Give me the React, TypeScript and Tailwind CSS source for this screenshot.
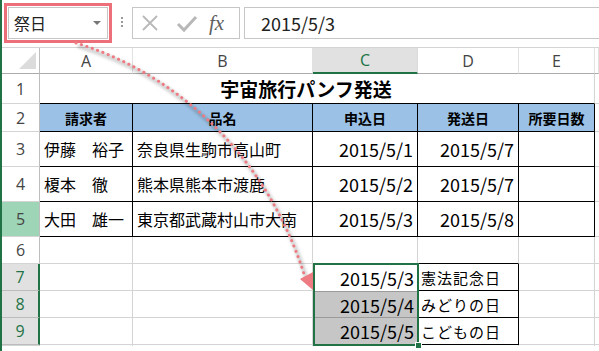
import React from 'react';

const jp = "font-['Noto_Sans_CJK_JP','Noto_Sans_CJK_SC',sans-serif]";

const RowHead: React.FC<{ n?: number; variant?: 'plain' | 'hot' | 'sel' }> = ({ n, variant = 'plain' }) => {
  if (variant === 'sel') {
    return (
      <div className="flex items-center justify-center bg-[#e1e1e1] border-b border-[#bcbcbc] border-r-2 border-r-[#217346] text-[#217346] text-[16px] font-['Open_Sans',sans-serif]">
        {n}
      </div>
    );
  }
  return (
    <div
      className={`flex items-center justify-center border-b border-[#d4d4d4] border-r border-r-[#bdbdbd] text-[#444] text-[16px] font-['Open_Sans',sans-serif] ${
        variant === 'hot' ? 'bg-[#9fd5b7]' : 'bg-white'
      }`}
    >
      {n}
    </div>
  );
};

const ColHead: React.FC<{ label: string; active?: boolean }> = ({ label, active }) => (
  <div
    className={`flex items-center justify-center text-[16px] font-['Open_Sans',sans-serif] ${
      active
        ? 'bg-[#e1e1e1] text-[#217346] border-b-2 border-[#217346] border-r border-r-[#dadada]'
        : 'bg-white text-[#444] border-b border-[#ababab] border-r border-r-[#e1e1e1]'
    }`}
  >
    {label}
  </div>
);

const App: React.FC = () => {
  const names = [
    ['伊藤　裕子', '奈良県生駒市高山町', '2015/5/1', '2015/5/7'],
    ['榎本　徹', '熊本県熊本市渡鹿', '2015/5/2', '2015/5/7'],
    ['大田　雄一', '東京都武蔵村山市大南', '2015/5/3', '2015/5/8'],
  ];

  return (
    <div className={`relative w-[599px] h-[351px] overflow-hidden bg-white border-l-2 border-[#217346] ${jp}`}>
      {/* name box + formula bar */}
      <div className="flex h-[48px] items-start border-b border-[#d4d4d4]">
        <div className="ml-[2px] mt-[3px] w-[108px] h-[40px] border-[3px] border-[#ec6f79] p-px">
          <div className="flex h-full items-center justify-between border border-[#c6c6c6] pl-[5px] pr-[6px]">
            <span className="text-[16px] text-[#222] leading-none">祭日</span>
            <span className="w-0 h-0 border-l-[4px] border-r-[4px] border-t-[4px] border-l-transparent border-r-transparent border-t-[#777]" />
          </div>
        </div>
        <div className="ml-[9px] mt-[17px] flex flex-col gap-[2px]">
          <span className="w-[2px] h-[2px] bg-[#999]" />
          <span className="w-[2px] h-[2px] bg-[#999]" />
          <span className="w-[2px] h-[2px] bg-[#999]" />
        </div>
        <div className="ml-[9px] mt-[7px] flex h-[32px] w-[108px] items-center border border-[#c6c6c6] bg-white">
          <svg width="22" height="22" viewBox="0 0 22 22" className="ml-[6px]">
            <path d="M4 4 L18 18 M18 4 L4 18" stroke="#b8b8b8" strokeWidth="1.8" fill="none" />
          </svg>
          <svg width="24" height="22" viewBox="0 0 24 22" className="ml-[14px]">
            <path d="M3 12 L9 18 L21 5" stroke="#b8b8b8" strokeWidth="3" fill="none" />
          </svg>
          <span className="ml-[10px] text-[21px] italic text-[#5f5f5f] leading-none font-['Liberation_Serif',serif]">fx</span>
        </div>
        <div className="ml-[4px] mt-[7px] flex h-[32px] flex-1 items-center border border-r-0 border-[#c6c6c6] pl-[16px]">
          <span className="text-[18px] text-[#222] leading-none">2015/5/3</span>
        </div>
      </div>

      {/* sheet */}
      <div className="grid grid-cols-[38px_93px_180px_105px_101px_76px_1fr] grid-rows-[26px_30px_28px_35px_35px_35px_27px_27px_27px_27px]">
        {/* column headers */}
        <div className="flex items-end justify-end pr-[3px] pb-[4px] bg-white border-b border-[#ababab] border-r border-r-[#bdbdbd]">
          <svg width="17" height="17" viewBox="0 0 17 17">
            <polygon points="17,0 17,17 0,17" fill="#dcdcdc" />
          </svg>
        </div>
        <ColHead label="A" />
        <ColHead label="B" />
        <ColHead label="C" active />
        <ColHead label="D" />
        <ColHead label="E" />
        <ColHead label="" />

        {/* row 1 */}
        <RowHead n={1} />
        <div className="col-span-5 flex items-center justify-center pr-[22px] border-b border-black border-r border-r-[#d4d4d4]">
          <span className="text-[19px] font-bold text-black leading-none">宇宙旅行パンフ発送</span>
        </div>
        <div className="border-b border-[#d4d4d4]" />

        {/* row 2 */}
        <RowHead n={2} />
        {['請求者', '品名', '申込日', '発送日', '所要日数'].map((h) => (
          <div
            key={h}
            className="flex items-center justify-center bg-[#9bc2e6] border-r border-b border-black text-[14px] font-bold text-black leading-none"
          >
            {h}
          </div>
        ))}
        <div className="border-b border-[#d4d4d4]" />

        {/* rows 3-5 */}
        {names.map((r, i) => (
          <React.Fragment key={r[0]}>
            <RowHead n={i + 3} variant={i === 2 ? 'hot' : 'plain'} />
            <div className="flex items-center pl-[4px] border-r border-b border-black text-[16px] text-black leading-none whitespace-pre">
              {r[0]}
            </div>
            <div className="flex items-center pl-[4px] border-r border-b border-black text-[16px] text-black leading-none">
              {r[1]}
            </div>
            <div className="flex items-center justify-end pr-[4px] border-r border-b border-black text-[18px] text-black leading-none">
              {r[2]}
            </div>
            <div className="flex items-center justify-end pr-[4px] border-r border-b border-black text-[18px] text-black leading-none">
              {r[3]}
            </div>
            <div className="border-r border-b border-black" />
            <div className="border-b border-[#d4d4d4]" />
          </React.Fragment>
        ))}

        {/* row 6 */}
        <RowHead n={6} />
        <div className="border-r border-b border-[#d4d4d4]" />
        <div className="border-r border-b border-[#d4d4d4]" />
        <div className="border-r border-[#d4d4d4]" />
        <div className="border-r border-b border-r-[#d4d4d4] border-b-black" />
        <div className="border-r border-b border-[#d4d4d4]" />
        <div className="border-b border-[#d4d4d4]" />

        {/* rows 7-9 */}
        <RowHead n={7} variant="sel" />
        <div className="border-r border-b border-[#d4d4d4]" />
        <div className="border-r border-b border-[#d4d4d4]" />
        <div className="relative row-span-3 -mt-px -mr-px -mb-px flex flex-col border-2 border-[#217346]">
          <div className="flex flex-1 items-center justify-end pr-[3px] bg-white border-b border-[#9a9a9a] text-[18px] text-black leading-none">
            2015/5/3
          </div>
          <div className="flex flex-1 items-center justify-end pr-[3px] bg-[#c6c6c6] border-b border-[#9a9a9a] text-[18px] text-black leading-none">
            2015/5/4
          </div>
          <div className="flex flex-1 items-center justify-end pr-[3px] bg-[#c6c6c6] text-[18px] text-black leading-none">
            2015/5/5
          </div>
          <span className="absolute -right-[5px] -bottom-[5px] w-[7px] h-[7px] bg-[#217346] border border-white" />
        </div>
        <div className="flex items-center pl-[3px] border-r border-b border-black text-[15px] tracking-[1px] text-black leading-none">
          憲法記念日
        </div>
        <div className="border-r border-b border-[#d4d4d4]" />
        <div className="border-b border-[#d4d4d4]" />

        <RowHead n={8} variant="sel" />
        <div className="border-r border-b border-[#d4d4d4]" />
        <div className="border-r border-b border-[#d4d4d4]" />
        <div className="flex items-center pl-[3px] border-r border-b border-black text-[15px] tracking-[1px] text-black leading-none">
          みどりの日
        </div>
        <div className="border-r border-b border-[#d4d4d4]" />
        <div className="border-b border-[#d4d4d4]" />

        <RowHead n={9} variant="sel" />
        <div className="border-r border-b border-[#d4d4d4]" />
        <div className="border-r border-b border-[#d4d4d4]" />
        <div className="flex items-center pl-[3px] border-r border-b border-black text-[15px] tracking-[1px] text-black leading-none">
          こどもの日
        </div>
        <div className="border-r border-b border-[#d4d4d4]" />
        <div className="border-b border-[#d4d4d4]" />

        {/* row 10 (cut off at the window edge) */}
        <RowHead />
        <div className="border-r border-[#d4d4d4]" />
        <div className="border-r border-[#d4d4d4]" />
        <div className="border-r border-[#d4d4d4]" />
        <div className="border-r border-[#d4d4d4]" />
        <div className="border-r border-[#d4d4d4]" />
        <div />
      </div>

      {/* dotted pointer from the name box to C7 */}
      <svg className="pointer-events-none absolute top-0 -left-[2px]" width="599" height="351" viewBox="0 0 599 351">
        <defs>
          <filter id="soft" x="-10%" y="-10%" width="120%" height="120%">
            <feGaussianBlur stdDeviation="1.5" />
          </filter>
        </defs>
        <path d="M78 46 C 162 71, 264 143, 307 280" stroke="#000" strokeOpacity="0.18" strokeWidth="4" fill="none" filter="url(#soft)" />
        <path d="M76 43 C 160 68, 262 140, 305 277" stroke="#ee7a82" strokeWidth="3" strokeDasharray="0.1 5.6" strokeLinecap="round" fill="none" />
        <polygon points="300,279 313,272 313,290" fill="#ee7a82" />
      </svg>
    </div>
  );
};

export default App;
